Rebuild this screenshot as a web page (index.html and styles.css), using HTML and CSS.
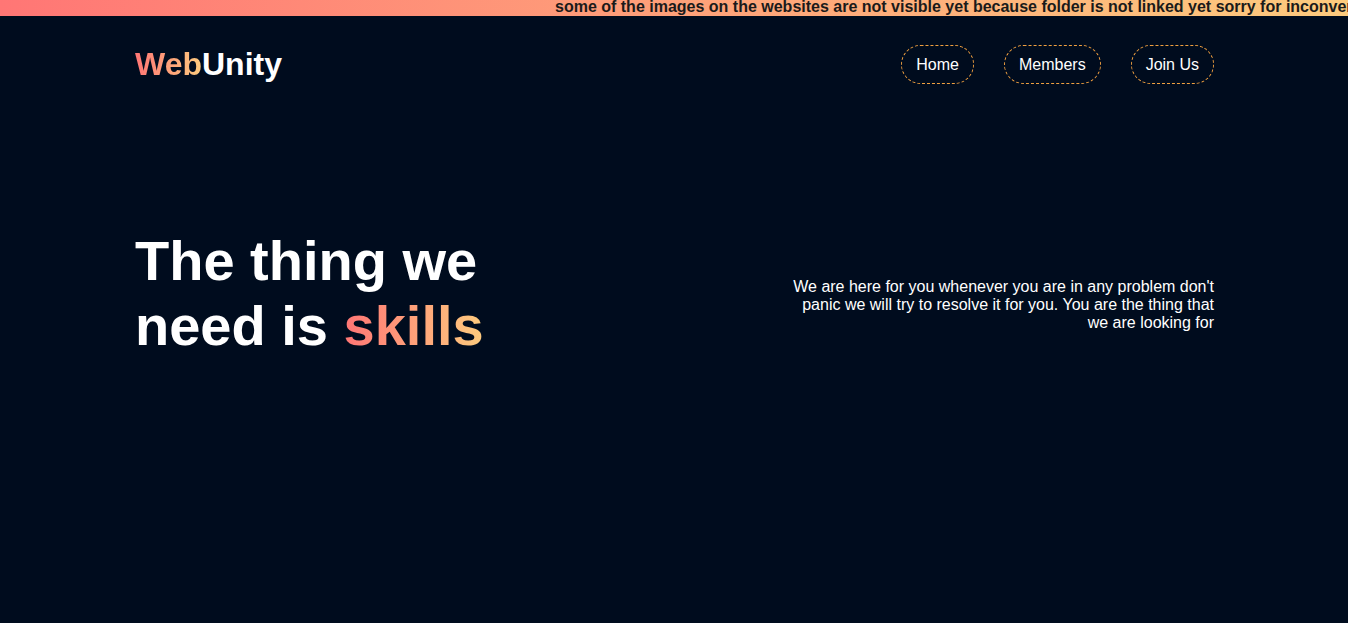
FILE: index.html
```html
<!DOCTYPE html>
<html lang="en">
<head>
<meta charset="utf-8">
<title>WebUnity</title>
<link rel="stylesheet" href="styles.css">
</head>
<body>
<div class="notice"><p class="notice-text">some of the images on the websites are not visible yet because folder is not linked yet sorry for inconvenience</p></div>
<header class="header">
<a class="logo" href="#"><span class="accent">Web</span>Unity</a>
<nav class="nav">
<a class="nav-link" href="#">Home</a>
<a class="nav-link" href="#">Members</a>
<a class="nav-link" href="#">Join Us</a>
</nav>
</header>
<main class="hero">
<h1 class="title">The thing we need is <span class="accent">skills</span></h1>
<p class="lead">We are here for you whenever you are in any problem don't panic we will try to resolve it for you. You are the thing that we are looking for</p>
</main>
</body>
</html>
```

FILE: styles.css
```css
* {
  box-sizing: border-box;
  margin: 0;
  padding: 0;
}

body {
  min-height: 100vh;
  background: #000c1e;
  color: #fff;
  font-family: "Liberation Sans", Arial, sans-serif;
  font-size: 16px;
  line-height: 18px;
}

.notice {
  height: 16px;
  overflow: hidden;
  background: linear-gradient(to right, #ff7675, #fdcb7e);
  color: #1a1a1a;
}

.notice-text {
  padding-left: 555px;
  font-weight: bold;
  line-height: 14px;
  white-space: nowrap;
}

.header {
  display: flex;
  justify-content: space-between;
  align-items: center;
  padding: 29px 134px 0 135px;
}

.logo {
  color: #fff;
  font-size: 32px;
  font-weight: bold;
  line-height: 39px;
  text-decoration: none;
}

.accent {
  background: linear-gradient(to right, #ff7675, #fdcb7e);
  -webkit-background-clip: text;
  background-clip: text;
  color: transparent;
}

.nav {
  display: flex;
  gap: 30px;
}

.nav-link {
  padding: 10px 14px 9px;
  border: 1px dashed #f0a040;
  border-radius: 20px;
  color: #fff;
  text-decoration: none;
}

.hero {
  display: flex;
  justify-content: space-between;
  align-items: center;
  padding: 144px 134px 0 135px;
}

.title {
  width: 400px;
  font-size: 56px;
  line-height: 65px;
}

.lead {
  width: 432px;
  padding-top: 24px;
  text-align: right;
}
```
